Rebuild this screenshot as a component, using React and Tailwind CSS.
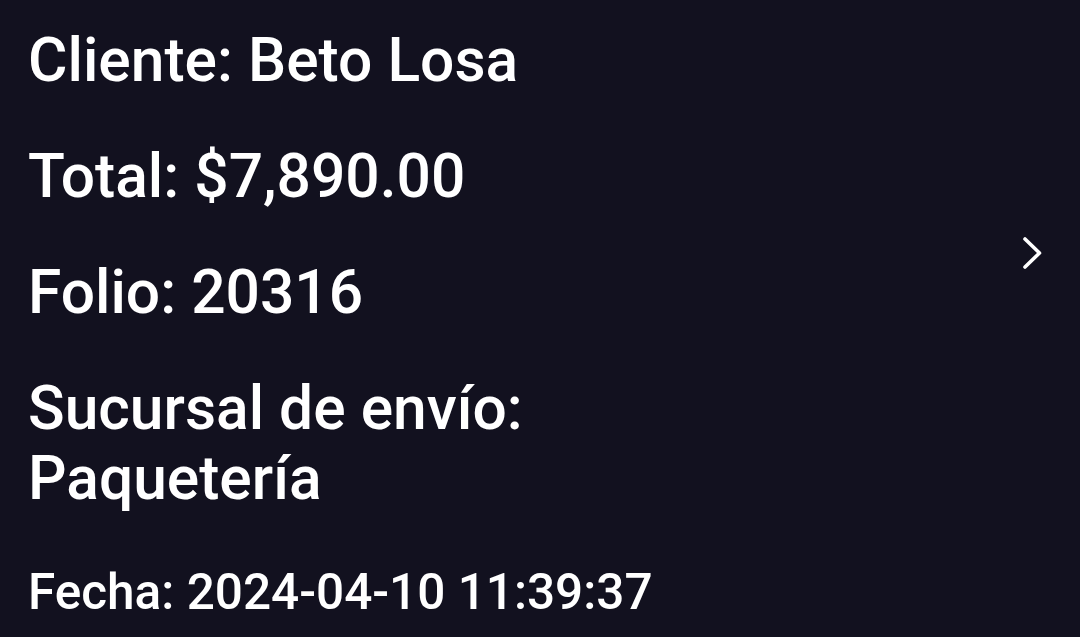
export default function App() {
  return (
    <div className="w-[1080px] h-[637px] overflow-hidden bg-[#12111f] text-white" style={{ fontFamily: "Roboto, 'Noto Sans', sans-serif" }}>
      <div className="flex flex-row pl-[28px] pr-[36px] pt-[26px]">
        <div className="w-[720px] flex flex-col gap-[46px] text-[60.5px] leading-[70px] font-medium">
          <p>Cliente: Beto Losa</p>
          <p>Total: $7,890.00</p>
          <p>Folio: 20316</p>
          <p className="w-[600px]">Sucursal de envío: Paquetería</p>
          <p className="text-[49.5px] leading-[58px] mt-[3px]">Fecha: 2024-04-10 11:39:37</p>
        </div>
        <div className="flex-1 flex justify-end">
          <svg className="mt-[207px]" width="24" height="40" viewBox="0 0 24 40" fill="none" stroke="white" strokeWidth="3.6" strokeLinecap="round" strokeLinejoin="round">
            <path d="M5 6l14.5 14-14.5 14" />
          </svg>
        </div>
      </div>
    </div>
  );
}
